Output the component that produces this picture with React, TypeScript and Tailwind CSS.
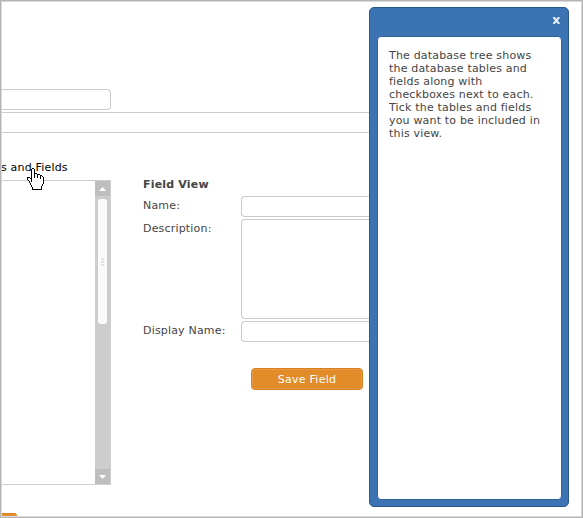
const HAND = [
  '.....XX..........',
  '....XooX.........',
  '....XooX.........',
  '....XooX.........',
  '....XooX.........',
  '....XooXXX.......',
  '....XooXooXXX....',
  '....XooXooXooXX..',
  '....XooXooXooXoX.',
  'XXX.XooXooXooXooX',
  'XooXXooooooooXooX',
  'XoooXoooooooooooX',
  '.XooXoooooooooooX',
  '..XoXoooooooooooX',
  '..XoooooooooooooX',
  '...XooooooooooooX',
  '...XoooooooooooX.',
  '....XooooooooooX.',
  '....XoooooooooX..',
  '.....XooooooooX..',
  '.....XooooooooX..',
  '.....XXXXXXXXXX..',
];

function HandCursor() {
  return (
    <svg className="absolute left-[27px] top-[168px]" width="17" height="22" shapeRendering="crispEdges">
      {HAND.flatMap((row, y) =>
        [...row].map((c, x) =>
          c === '.' ? null : <rect key={`${x}-${y}`} x={x} y={y} width="1" height="1" fill={c === 'X' ? '#000' : '#fff'} />,
        ),
      )}
    </svg>
  );
}

function ListBox() {
  return (
    <div className="flex h-[305px] w-[111px] justify-end border-y border-[#cdcdcd]">
      <div className="flex w-4 flex-col bg-[#cdcdcd]">
        <div className="flex h-[15px] w-[15px] items-center justify-center bg-[#bebebe]">
          <svg width="7" height="4"><path d="M3.5 0 7 4H0Z" fill="#fff" /></svg>
        </div>
        <div className="ml-[3px] mt-[3px] flex h-[125px] w-[9px] flex-col items-center justify-center gap-px rounded-[3px] bg-[#fafafa]">
          <div className="h-0.5 w-[3px] bg-[#e2e2e2]" />
          <div className="h-0.5 w-[3px] bg-[#e2e2e2]" />
          <div className="h-0.5 w-[3px] bg-[#e2e2e2]" />
        </div>
        <div className="mt-auto flex h-[15px] w-[15px] items-center justify-center bg-[#bebebe]">
          <svg width="7" height="4"><path d="M0 0H7L3.5 4Z" fill="#fff" /></svg>
        </div>
      </div>
    </div>
  );
}

function FieldForm() {
  const label = 'w-[98px] shrink-0 pt-[3px]';
  const box = 'w-[140px] shrink-0 rounded-l-[4px] border border-r-0 border-[#cbcbcb] bg-white';
  return (
    <div className="ml-8 w-[240px] pt-[18px] text-[#444]">
      <div className="h-[18px] font-bold">Field View</div>
      <div className="flex h-[23px]">
        <div className={label}>Name:</div>
        <div className={`${box} h-[21px]`} />
      </div>
      <div className="flex h-[102px]">
        <div className={label}>Description:</div>
        <div className={`${box} h-[100px]`} />
      </div>
      <div className="flex h-[21px]">
        <div className={label}>Display Name:</div>
        <div className={`${box} h-[21px]`} />
      </div>
      <button className="ml-[108px] mt-[26px] flex h-[22px] w-28 items-center justify-center rounded-[4px] border border-[#d87f20] bg-[#e18c29] tracking-[0.27px] text-white shadow-[inset_0_0_0_1px_#e79a43]">
        Save Field
      </button>
    </div>
  );
}

function HelpPanel() {
  return (
    <aside className="absolute left-[369px] top-[7px] flex h-[500px] w-[200px] flex-col rounded-[5px] border border-[#2a588e] bg-[#3b73b3] pl-[7px] pr-[6px] pb-[6px]">
      <header className="flex h-[28px] justify-end pt-[5px] pr-px">
        <svg className="mt-[4px]" width="9" height="7"><path d="M1.5 0 7.2 7M7.2 0 1.5 7" stroke="#e9f0f8" strokeWidth="2" /></svg>
      </header>
      <div className="flex-1 rounded-[4px] border border-[#2f629f] bg-white px-[11px] pt-[12px] text-[#444]">
        <p className="whitespace-nowrap">
          The database tree shows<br />the database tables and<br />fields along with<br />checkboxes next to each.<br />
          Tick the tables and fields<br />you want to be included in<br />this view.
        </p>
      </div>
    </aside>
  );
}

export default function App() {
  return (
    <div className="relative h-[518px] w-[583px] overflow-hidden bg-white font-['DejaVu_Sans',Verdana,sans-serif] text-[11px] leading-[13px] tracking-[0.18px]">
      <div className="h-[89px]" />
      <div className="h-[21px] w-[111px] rounded-r-[4px] border border-l-0 border-[#cbcbcb]" />
      <div className="mt-[2px] h-[21px] w-[370px] border-y border-[#cbcbcb]" />
      <div className="flex pt-[27px]">
        <div className="w-[111px]">
          <div className="h-5 whitespace-nowrap pl-px pt-px text-black">s and Fields</div>
          <ListBox />
        </div>
        <FieldForm />
      </div>
      <div className="mt-7 h-[5px] w-[17px] rounded-tr-[3px] border-t border-[#d87f20] bg-[#e29138]" />
      <HandCursor />
      <HelpPanel />
      <div className="pointer-events-none absolute inset-0 border border-[#b4b4b4]">
        <div className="h-full border border-[#dadada]" />
      </div>
    </div>
  );
}
